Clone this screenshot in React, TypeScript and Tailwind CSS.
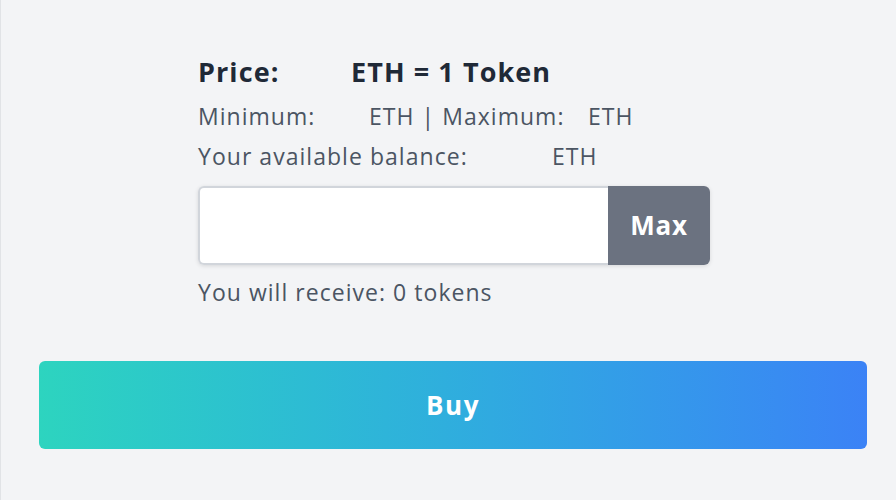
const App = () => {
  return (
    <div
      className="w-[896px] h-[500px] bg-[#f3f4f6] border-l border-[#e1e3e6] flex flex-col"
      style={{ fontFamily: '"Open Sans", "Noto Sans", sans-serif' }}
    >
      {/* price info */}
      <div className="pl-[197px] pt-[52px] flex flex-col">
        <div className="flex h-10 items-center text-[27px] font-bold tracking-[0.04em] text-[#1f2937]">
          <span className="w-[153px]">Price:</span>
          <span>ETH = 1 Token</span>
        </div>
        <div className="mt-1 flex h-10 items-center text-[23px] tracking-[0.045em] text-[#4b5563]">
          <span className="w-[171px]">Minimum:</span>
          <span className="w-[219px]">ETH | Maximum:</span>
          <span>ETH</span>
        </div>
        <div className="flex h-10 items-center text-[23px] tracking-[0.045em] text-[#4b5563]">
          <span className="w-[354px]">Your available balance:</span>
          <span>ETH</span>
        </div>

        {/* amount input */}
        <div className="mt-[10px] flex w-[512px] h-[79px] rounded-md shadow-[0_1px_4px_rgba(0,0,0,0.12)]">
          <input
            type="text"
            className="w-[410px] h-full bg-white border-2 border-[#d1d5db] border-r-0 rounded-l-md outline-none px-3 text-[22px]"
          />
          <button className="w-[102px] h-full bg-[#6b7280] text-white text-[26px] font-bold tracking-[0.03em] rounded-r-md">
            Max
          </button>
        </div>

        <div className="mt-[7px] flex h-10 items-center text-[23px] tracking-[0.045em] text-[#4b5563]">
          You will receive: 0 tokens
        </div>
      </div>

      {/* buy */}
      <button className="mt-[49px] ml-[38px] mr-[29px] h-[88px] rounded-md bg-gradient-to-r from-[#2dd4bf] to-[#3b82f6] text-white text-[26px] font-bold tracking-[0.06em]">
        Buy
      </button>
    </div>
  );
};

export default App;
